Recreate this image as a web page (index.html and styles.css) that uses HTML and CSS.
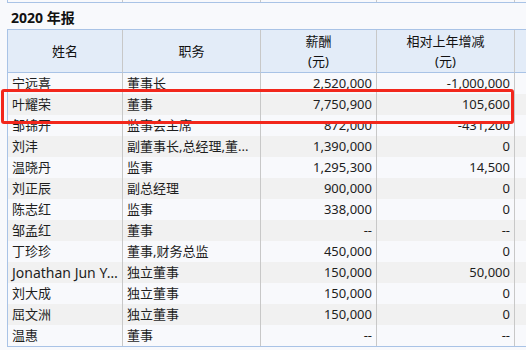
FILE: index.html
```html
<!DOCTYPE html>
<html lang="zh">
<head>
<meta charset="utf-8">
<link rel="stylesheet" href="styles.css">
</head>
<body>
<div class="prev">
  <div class="pc"></div><div class="pc"></div><div class="pc"></div><div class="pc"></div><div class="pc last"></div>
</div>
<div class="title">2020 年报</div>
<table class="grid">
  <thead>
    <tr>
      <th class="c1">姓名</th>
      <th class="c2">职务</th>
      <th class="c3">薪酬<br>(元)</th>
      <th class="c4">相对上年增减<br>(元)</th>
      <th class="c5"></th>
    </tr>
  </thead>
  <tbody>
    <tr><td>宁远喜</td><td>董事长</td><td class="n">2,520,000</td><td class="n">-1,000,000</td><td></td></tr>
    <tr><td>叶耀荣</td><td>董事</td><td class="n">7,750,900</td><td class="n">105,600</td><td></td></tr>
    <tr><td>邹锦开</td><td>监事会主席</td><td class="n">872,000</td><td class="n">-431,200</td><td></td></tr>
    <tr><td>刘沣</td><td title="副董事长,总经理,董事">副董事长,总经理,董...</td><td class="n">1,390,000</td><td class="n">0</td><td></td></tr>
    <tr><td>温晓丹</td><td>监事</td><td class="n">1,295,300</td><td class="n">14,500</td><td></td></tr>
    <tr><td>刘正辰</td><td>副总经理</td><td class="n">900,000</td><td class="n">0</td><td></td></tr>
    <tr><td>陈志红</td><td>监事</td><td class="n">338,000</td><td class="n">0</td><td></td></tr>
    <tr><td>邹孟红</td><td>董事</td><td class="n">--</td><td class="n">--</td><td></td></tr>
    <tr><td>丁珍珍</td><td>董事,财务总监</td><td class="n">450,000</td><td class="n">0</td><td></td></tr>
    <tr><td class="latin">Jonathan Jun Yan</td><td>独立董事</td><td class="n">150,000</td><td class="n">50,000</td><td></td></tr>
    <tr><td>刘大成</td><td>独立董事</td><td class="n">150,000</td><td class="n">0</td><td></td></tr>
    <tr><td>屈文洲</td><td>独立董事</td><td class="n">150,000</td><td class="n">0</td><td></td></tr>
    <tr><td>温惠</td><td>董事</td><td class="n">--</td><td class="n">--</td><td></td></tr>
  </tbody>
</table>
<div class="highlight"></div>
</body>
</html>
```
FILE: styles.css
```css
html, body {
  margin: 0;
  padding: 0;
}
body {
  width: 526px;
  height: 350px;
  overflow: hidden;
  position: relative;
  background: #f8f9fc;
  color: #1e1e1e;
  font-family: "Noto Sans", "Noto Sans CJK SC", sans-serif;
  font-size: 13px;
}
.prev {
  margin-left: 7px;
  display: grid;
  grid-template-columns: 115px 138px 116px 138px 120px;
  height: 2px;
  border-left: 1px solid #a9c3e6;
  border-bottom: 1px solid #a9c3e6;
}
.pc {
  border-right: 1px solid #c8c8c8;
  box-sizing: border-box;
}
.title {
  box-sizing: border-box;
  height: 26px;
  padding: 6px 0 0 11px;
  line-height: 18px;
  font-size: 14px;
  font-weight: bold;
  color: #111;
}
.grid {
  margin-left: 7px;
  border-collapse: separate;
  border-spacing: 0;
  table-layout: fixed;
  width: 628px;
  border-left: 1px solid #a9c3e6;
  border-top: 1px solid #a9c3e6;
  border-bottom: 1px solid #a9c3e6;
}
.grid th, .grid td {
  box-sizing: border-box;
  border-right: 1px solid #c8c8c8;
  white-space: nowrap;
  overflow: hidden;
  text-overflow: ellipsis;
}
.grid th {
  height: 43px;
  background: #e3ecf8;
  border-bottom: 1px solid #a9c3e6;
  font-weight: normal;
  line-height: 20px;
  padding: 0 4px;
  text-align: center;
  vertical-align: middle;
  color: #111;
}
.c1 { width: 115px; }
.c2 { width: 138px; }
.c3 { width: 116px; }
.c4 { width: 138px; }
.c5 { width: 120px; }
.grid td {
  height: 21px;
  padding: 0 4px;
  line-height: 21px;
  background: #f8f9fc;
}
.grid td.latin {
  font-size: 14px;
}
.grid tbody tr:nth-child(even) td {
  background: #f1f1f1;
}
.grid td.n {
  text-align: right;
}
.highlight {
  position: absolute;
  left: 1px;
  top: 89px;
  width: 513px;
  height: 35px;
  box-sizing: border-box;
  border: 3px solid #f2271c;
  border-radius: 3px;
}
```
